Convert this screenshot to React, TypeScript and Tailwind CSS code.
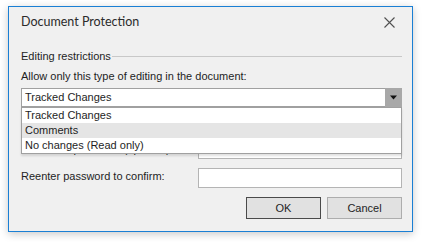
import React from "react";

const body = { fontFamily: '"Liberation Sans", Arial, sans-serif' };
const title = { fontFamily: 'Lato, "Noto Sans", sans-serif' };

export default function App() {
  return (
    <div className="w-[422px] h-[242px] bg-white pl-[8px] pt-[6px]" style={body}>
      <div className="w-[405px] h-[226px] border border-[#1a7fd4] bg-[#f0f0f0] shadow-[0_2px_8px_rgba(0,0,0,0.22)] pl-[12px] pr-[10px] flex flex-col text-[11px] text-[#1e1e1e] leading-[15px]">
        {/* Title */}
        <div className="h-[30px] flex items-center justify-between">
          <span className="text-[12.5px] leading-[18px] text-[#2b2b2b]" style={title}>Document Protection</span>
          <svg width="11" height="11" viewBox="0 0 11 11" className="mr-[7px]">
            <path d="M0.5 0.5 L10.5 10.5 M10.5 0.5 L0.5 10.5" stroke="#505050" strokeWidth="1.1" />
          </svg>
        </div>
        {/* Group header */}
        <div className="mt-[11px] h-[16px] flex items-center">
          <span>Editing restrictions</span>
          <div className="flex-1 h-px bg-[#c8c8c8] ml-[1px] mt-[1px]" />
        </div>
        <div className="mt-[4px] h-[16px] flex items-center">Allow only this type of editing in the document:</div>
        {/* Combo */}
        <div className="relative mt-[4px]">
          <div className="h-[19px] flex border border-[#a0a0a0] bg-white">
            <div className="flex-1 pl-[3px] flex items-center">Tracked Changes</div>
            <div className="w-[17px] -my-px -mr-px bg-[#a8a8a8] flex items-center justify-center">
              <svg width="7" height="5" viewBox="0 0 7 5">
                <path d="M0 0.5 H7 L3.5 4.5 Z" fill="#111" />
              </svg>
            </div>
          </div>
          <div className="absolute left-0 right-0 top-full z-10 border border-[#a0a0a0] bg-white shadow-[0_2px_2px_rgba(0,0,0,0.12)]">
            <div className="h-[15px] pl-[3px] flex items-center">Tracked Changes</div>
            <div className="h-[15px] pl-[3px] flex items-center bg-[#e5e5e5]">Comments</div>
            <div className="h-[15px] pl-[3px] flex items-center">No changes (Read only)</div>
          </div>
        </div>
        {/* Password rows */}
        <div className="mt-[32px] h-[20px] flex items-center">
          <div className="w-[177px]">Enter new password (optional):</div>
          <div className="flex-1 h-[20px] border border-[#b4b4b4] bg-white" />
        </div>
        <div className="mt-[9px] h-[20px] flex items-center">
          <div className="w-[177px] -mt-[3px]">Reenter password to confirm:</div>
          <div className="flex-1 h-[20px] border border-[#b4b4b4] bg-white" />
        </div>
        {/* Buttons */}
        <div className="mt-[9px] flex justify-end gap-[6px]">
          <div className="w-[75px] h-[22px] border border-[#4a4a4a] bg-[#e1e1e1] flex items-center justify-center">OK</div>
          <div className="w-[75px] h-[22px] border border-[#adadad] bg-[#e1e1e1] flex items-center justify-center">Cancel</div>
        </div>
      </div>
    </div>
  );
}
